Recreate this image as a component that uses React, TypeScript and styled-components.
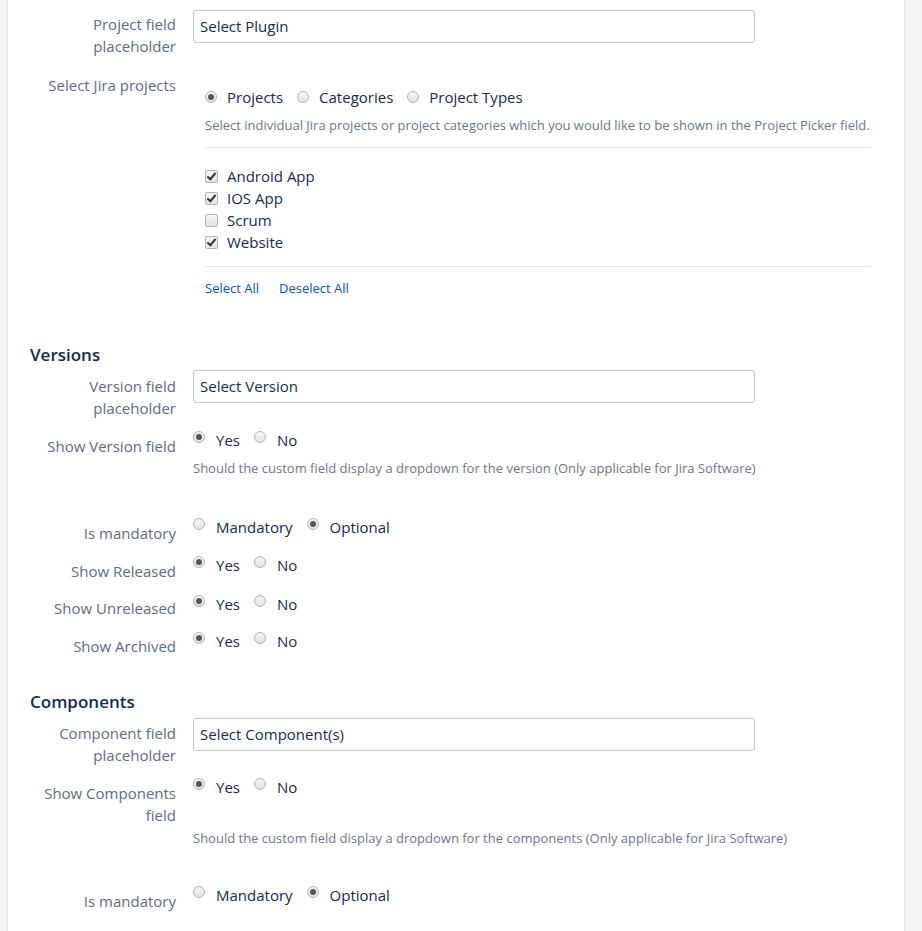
import React from "react";
import styled, { createGlobalStyle } from "styled-components";

const Global = createGlobalStyle`
  html, body { margin: 0; background: #f4f5f7; }
  body { font-family: "Segoe UI", "Open Sans", "Noto Sans", sans-serif; color: #172b4d; }
`;

const Page = styled.div`
  margin-left: 7px;
  width: 898px;
  height: 931px;
  background: #fff;
  border-left: 1px solid #e6e8ec;
  border-right: 1px solid #e6e8ec;
  box-sizing: border-box;
  overflow: hidden;
`;
const Inner = styled.div`
  margin-top: -22px;
`;
const Heading = styled.h3<{ mt?: number }>`
  margin: ${p => p.mt ?? 0}px 0 0 22px;
  font-size: 17px;
  font-weight: 600;
  line-height: 22px;
  height: 22px;
  color: #172b4d;
`;
const Row = styled.div<{ mt?: number }>`
  display: flex;
  margin-top: ${p => p.mt ?? 0}px;
`;
const Label = styled.div<{ pt?: number }>`
  width: 168px;
  flex: none;
  text-align: right;
  font-size: 15px;
  line-height: 22px;
  color: #5e6c84;
  padding-top: ${p => p.pt ?? 0}px;
`;
const Field = styled.div<{ indent?: number }>`
  margin-left: ${p => 17 + (p.indent ?? 0)}px;
  flex: 1;
`;
const Input = styled.div`
  width: 562px;
  height: 33px;
  box-sizing: border-box;
  border: 1px solid #c1c7d0;
  border-radius: 3px;
  font-size: 15px;
  line-height: 31px;
  padding-left: 6px;
  color: #172b4d;
`;
const Options = styled.div<{ mt?: number }>`
  display: flex;
  align-items: center;
  height: 22px;
  font-size: 15px;
  margin-top: ${p => p.mt ?? 0}px;
`;
const Option = styled.label<{ raise?: boolean }>`
  display: flex;
  align-items: ${p => (p.raise ? "flex-start" : "center")};
  margin-right: 14px;
  color: #172b4d;
  line-height: 22px;
`;
const Radio = styled.span<{ on?: boolean; raise?: boolean }>`
  width: 12px;
  height: 12px;
  border-radius: 50%;
  border: 1px solid #b0b4ba;
  background: linear-gradient(#f6f6f6, #e2e2e2);
  box-sizing: border-box;
  position: relative;
  margin-right: ${p => (p.raise ? 11 : 10)}px;
  margin-top: ${p => (p.raise ? 2 : 0)}px;
  &::after {
    content: "";
    display: ${p => (p.on ? "block" : "none")};
    position: absolute;
    left: 2px; top: 2px;
    width: 6px; height: 6px;
    border-radius: 50%;
    background: #555;
  }
`;
const Check = styled.span<{ on?: boolean }>`
  width: 13px;
  height: 13px;
  border: 1px solid #b0b4ba;
  border-radius: 2px;
  background: linear-gradient(#f6f6f6, #e2e2e2);
  box-sizing: border-box;
  margin-right: 9px;
  position: relative;
  &::after {
    content: "";
    display: ${p => (p.on ? "block" : "none")};
    position: absolute;
    left: 3px; top: 0px;
    width: 3px; height: 7px;
    border: solid #333;
    border-width: 0 2px 2px 0;
    transform: rotate(40deg);
  }
`;
const Help = styled.div<{ mt?: number }>`
  font-size: 13px;
  line-height: 18px;
  color: #6b778c;
  margin-top: ${p => p.mt ?? 0}px;
`;
const Divider = styled.hr`
  border: 0;
  border-top: 1px solid #e4e6ea;
  width: 666px;
  margin: 13px 0 0 0;
`;
const CheckList = styled.div`
  display: flex;
  flex-direction: column;
  margin-top: 17px;
  font-size: 15px;
`;
const CheckRow = styled.label`
  display: flex;
  align-items: center;
  height: 22px;
  color: #172b4d;
`;
const Links = styled.div`
  display: flex;
  gap: 20px;
  margin-top: 12px;
  font-size: 13px;
`;
const Link = styled.a`
  color: #0052cc;
  text-decoration: none;
`;

const YesNo = ({ mand = false }: { mand?: boolean }) => (
  <>
    <Option raise>
      <Radio raise on={!mand} />
      {mand ? "Mandatory" : "Yes"}
    </Option>
    <Option raise>
      <Radio raise on={mand} />
      {mand ? "Optional" : "No"}
    </Option>
  </>
);

export default function App() {
  return (
    <>
      <Global />
      <Page>
        <Inner>
          <Heading>Project</Heading>
          <Row mt={10}>
            <Label pt={3}>Project field<br />placeholder</Label>
            <Field><Input>Select Plugin</Input></Field>
          </Row>
          <Row mt={17}>
            <Label>Select Jira projects</Label>
            <Field indent={12}>
              <Options mt={12}>
                <Option><Radio on />Projects</Option>
                <Option><Radio />Categories</Option>
                <Option><Radio />Project Types</Option>
              </Options>
              <Help mt={8}>Select individual Jira projects or project categories which you would like to be shown in the Project Picker field.</Help>
              <Divider />
              <CheckList>
                <CheckRow><Check on />Android App</CheckRow>
                <CheckRow><Check on />IOS App</CheckRow>
                <CheckRow><Check />Scrum</CheckRow>
                <CheckRow><Check on />Website</CheckRow>
              </CheckList>
              <Divider />
              <Links>
                <Link href="#">Select All</Link>
                <Link href="#">Deselect All</Link>
              </Links>
            </Field>
          </Row>
          <Heading mt={47}>Versions</Heading>
          <Row mt={4}>
            <Label pt={5}>Version field<br />placeholder</Label>
            <Field><Input>Select Version</Input></Field>
          </Row>
          <Row mt={6}>
            <Label pt={10}>Show Version field</Label>
            <Field>
              <Options mt={4}><YesNo /></Options>
              <Help mt={8}>Should the custom field display a dropdown for the version (Only applicable for Jira Software)</Help>
            </Field>
          </Row>
          <Row mt={39}>
            <Label pt={6}>Is mandatory</Label>
            <Field><Options><YesNo mand /></Options></Field>
          </Row>
          <Row mt={10}>
            <Label pt={6}>Show Released</Label>
            <Field><Options><YesNo /></Options></Field>
          </Row>
          <Row mt={11}>
            <Label pt={4}>Show Unreleased</Label>
            <Field><Options><YesNo /></Options></Field>
          </Row>
          <Row mt={11}>
            <Label pt={5}>Show Archived</Label>
            <Field><Options><YesNo /></Options></Field>
          </Row>
          <Heading mt={34}>Components</Heading>
          <Row mt={5}>
            <Label pt={4}>Component field<br />placeholder</Label>
            <Field><Input>Select Component(s)</Input></Field>
          </Row>
          <Row mt={0}>
            <Label pt={16}>Show Components<br />field</Label>
            <Field>
              <Options mt={10}><YesNo /></Options>
              <Help mt={31}>Should the custom field display a dropdown for the components (Only applicable for Jira Software)</Help>
            </Field>
          </Row>
          <Row mt={37}>
            <Label pt={6}>Is mandatory</Label>
            <Field><Options><YesNo mand /></Options></Field>
          </Row>
        </Inner>
      </Page>
    </>
  );
}
